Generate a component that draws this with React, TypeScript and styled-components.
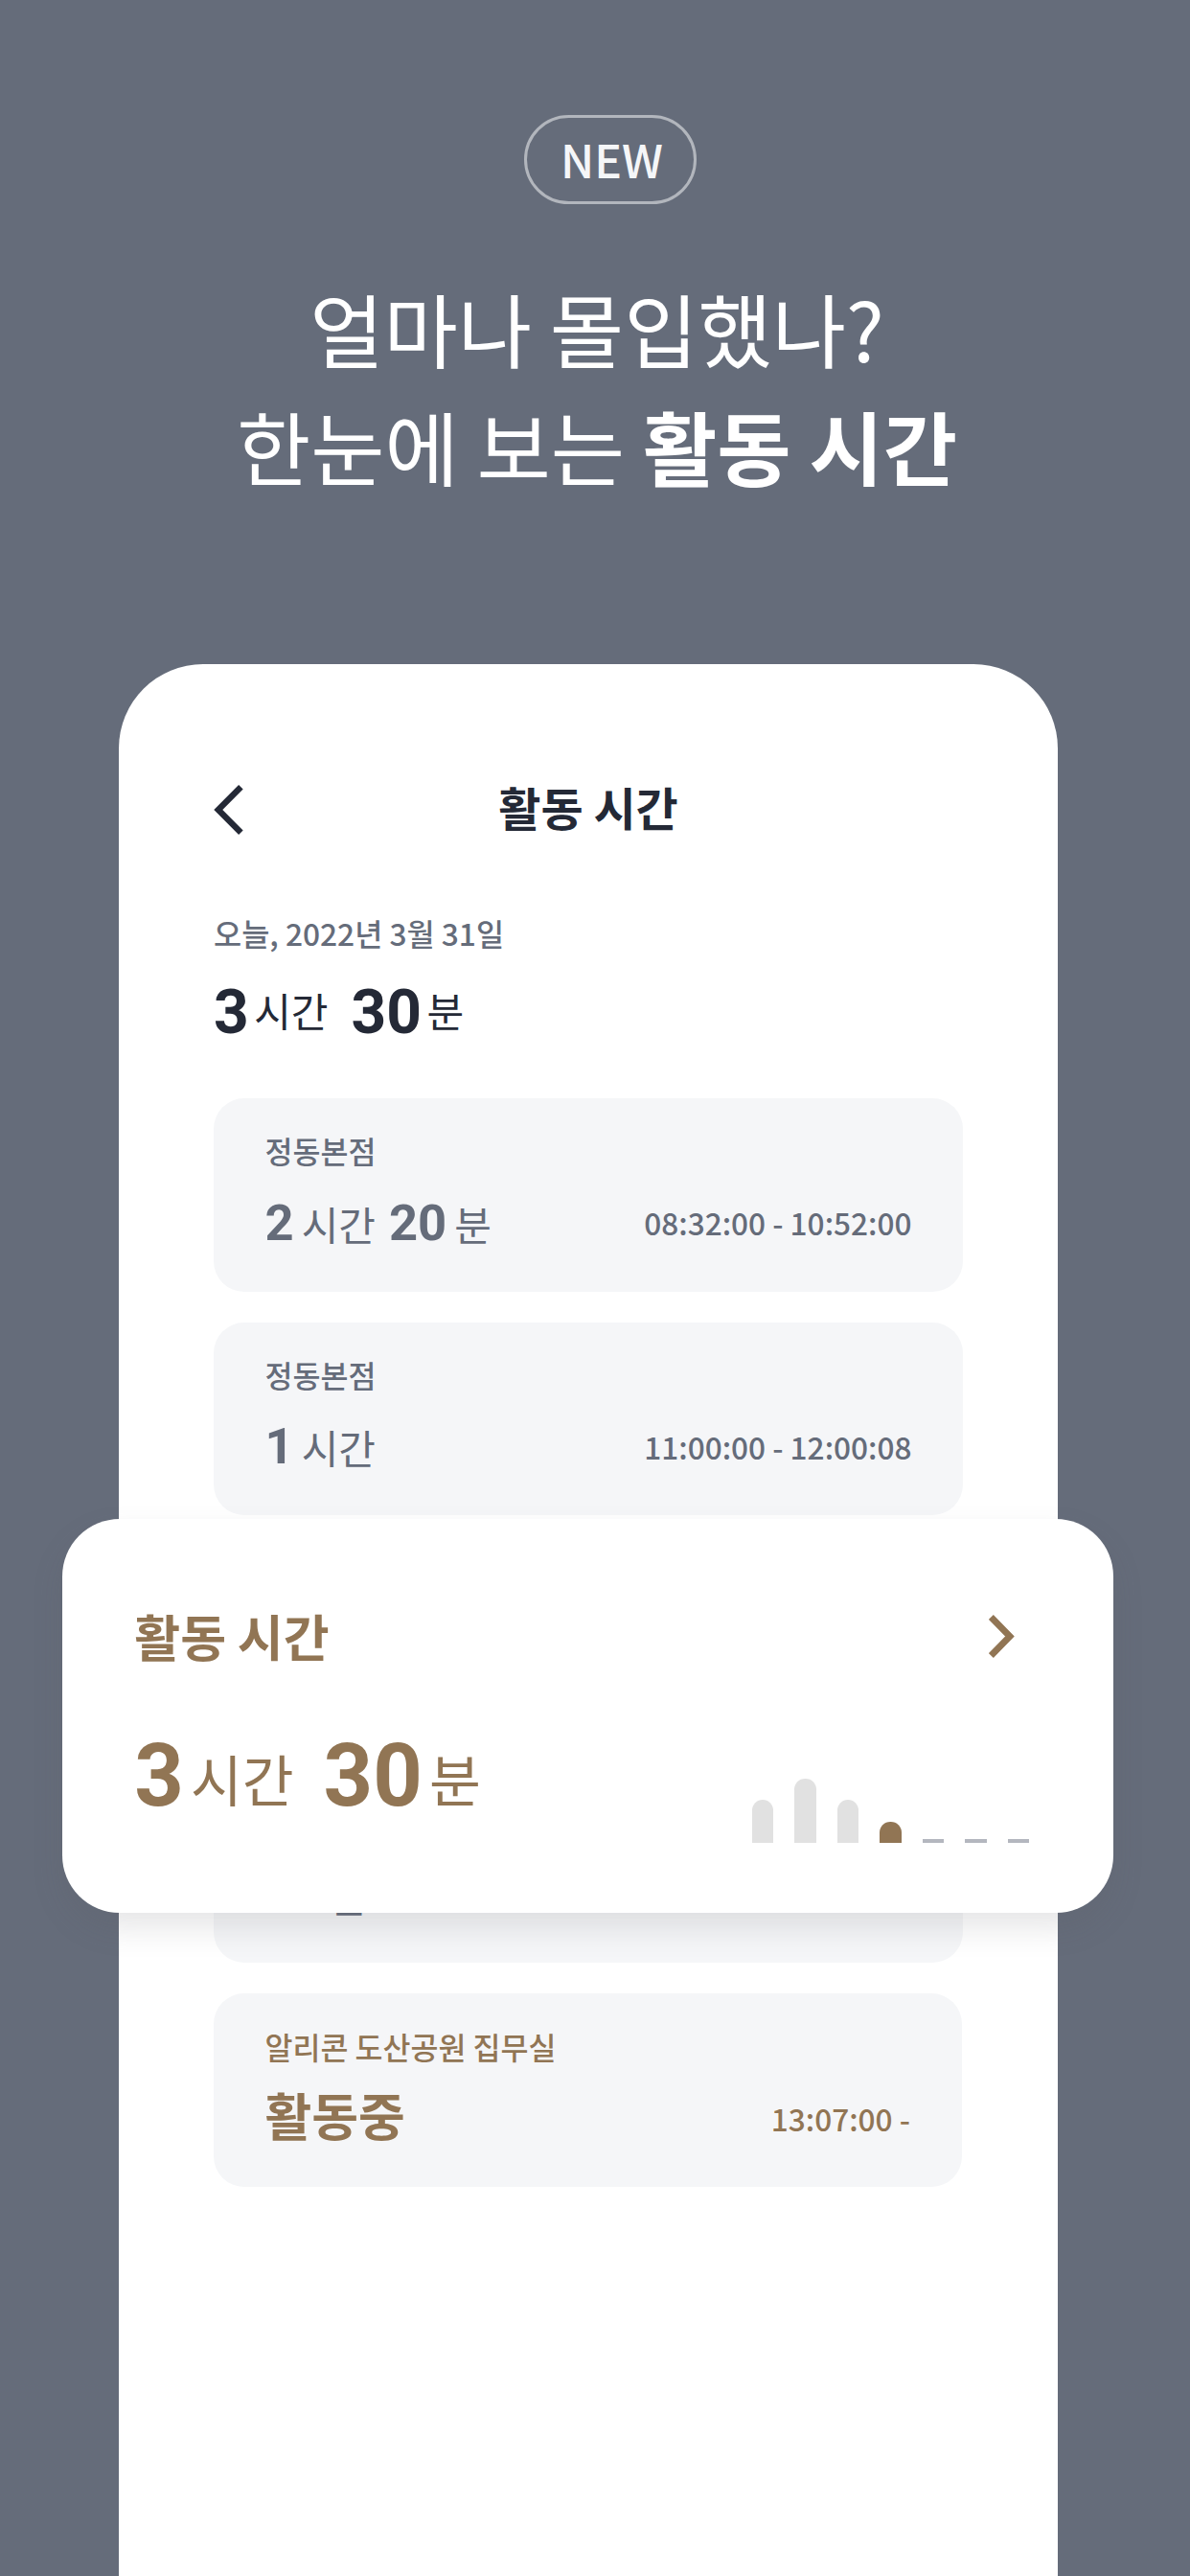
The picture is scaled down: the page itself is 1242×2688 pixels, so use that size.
import React from "react";
import styled, { createGlobalStyle, ThemeProvider } from "styled-components";

const theme = {
    colors: {
        background: "#656c7a",
        surface: "#ffffff",
        card: "#f5f6f8",
        dark: "#242936",
        gray: "#656c7a",
        brown: "#917554",
        bar: "#e1e1e1",
        empty: "#b4b7bf"
    }
};

const GlobalStyle = createGlobalStyle`
    * {
        box-sizing: border-box;
    }

    body {
        margin: 0;
        background: ${theme.colors.background};
        font-family: "Noto Sans CJK KR", sans-serif;
    }

    h1, h2, h3, p {
        margin: 0;
    }
`;

const Page = styled.main`
    display: flex;
    flex-direction: column;
    width: 1242px;
    height: 2688px;
    padding-top: 120px;
    overflow: hidden;
    color: ${props => props.theme.colors.surface};
`;

const Hero = styled.header`
    display: flex;
    flex-direction: column;
    align-items: center;
    height: 573px;
    flex: none;
`;

const Badge = styled.span`
    display: flex;
    justify-content: center;
    width: 180px;
    height: 93px;
    margin-left: 31px;
    padding-left: 4px;
    border: 3px solid rgba(255, 255, 255, 0.5);
    border-radius: 47px;
    color: #f5f6f8;
    font-size: 48px;
    font-weight: 500;
    line-height: 85px;
`;

const Headline = styled.h1`
    margin: 68px 0 0 4px;
    font-size: 84px;
    font-weight: 400;
    line-height: 122.6px;
    text-align: center;

    strong {
        font-weight: 700;
    }
`;

const Phone = styled.section`
    position: relative;
    flex: 1;
    width: 980px;
    margin-left: 124px;
    padding: 126px 99px 0;
    border-radius: 88px 88px 0 0;
    background: ${props => props.theme.colors.surface};
    color: ${props => props.theme.colors.dark};
`;

const NavBar = styled.nav`
    display: grid;
    grid-template-columns: 32px 1fr 32px;
    align-items: center;
    height: 52px;
`;

const NavTitle = styled.h2`
    margin-bottom: 7px;
    font-size: 48px;
    font-weight: 700;
    line-height: 45px;
    text-align: center;
`;

const Today = styled.p`
    margin-top: 78px;
    color: ${props => props.theme.colors.gray};
    font-size: 31.7px;
    font-weight: 500;
    line-height: 48px;
`;

// raise lifts the small unit label above the bottom of the digits' box
const DURATION = {
    large: { num: 90, unit: 58.5, gap: 7, split: 31, raise: 15 },
    medium: { num: 64, unit: 42, gap: 5.5, split: 24, raise: 14 },
    small: { num: 52.5, unit: 42, gap: 8, split: 14, raise: 4.5 }
};

type Size = keyof typeof DURATION;

const DurationRow = styled.div<{ $size: Size }>`
    display: flex;
    column-gap: ${props => DURATION[props.$size].split}px;
    height: ${props => DURATION[props.$size].num}px;
    white-space: nowrap;
`;

const Amount = styled.span<{ $size: Size }>`
    display: flex;
    align-items: flex-end;
    column-gap: ${props => DURATION[props.$size].gap}px;
    font-size: ${props => DURATION[props.$size].unit}px;
    font-weight: 400;
    line-height: 1;

    b {
        font-family: Roboto, sans-serif;
        font-size: ${props => DURATION[props.$size].num}px;
        font-weight: 700;
    }

    span {
        padding-bottom: ${props => DURATION[props.$size].raise}px;
    }
`;

const Summary = styled.div`
    margin-top: 28.4px;
`;

const List = styled.div`
    display: grid;
    gap: 32px;
    margin-top: 56.6px;
`;

const Card = styled.article<{ $active?: boolean }>`
    display: flex;
    flex-direction: column;
    height: 201.6px;
    margin-right: ${props => (props.$active ? 1.5 : 0)}px;
    padding: 30.5px 53.5px 0;
    border-radius: 32px;
    background: ${props => props.theme.colors.card};
    color: ${props => (props.$active ? props.theme.colors.brown : props.theme.colors.gray)};
`;

const Place = styled.h3`
    height: 48px;
    font-size: 31.5px;
    font-weight: 500;
    line-height: 48px;
`;

const CardRow = styled.div`
    display: flex;
    align-items: center;
    justify-content: space-between;
    height: 103px;
`;

const Status = styled.strong`
    margin-bottom: 8px;
    font-size: 53px;
    font-weight: 700;
    line-height: 54px;
`;

const Range = styled.time`
    margin-bottom: 1px;
    font-size: 31.6px;
    font-weight: 500;
    line-height: 48px;
`;

const Overlay = styled.section`
    position: absolute;
    top: 892px;
    left: -58.7px;
    width: 1096.7px;
    height: 411px;
    padding: 88px 88px 0 75px;
    border-radius: 60px;
    background: ${props => props.theme.colors.surface};
    box-shadow: 0 16px 32px rgba(84, 88, 96, 0.15);
    color: ${props => props.theme.colors.brown};
`;

const OverlayHeader = styled.div`
    display: flex;
    align-items: center;
    justify-content: space-between;
    height: 69px;
    padding-right: 15px;
`;

const OverlayTitle = styled.h2`
    margin-bottom: 2px;
    font-size: 52px;
    font-weight: 700;
    line-height: 64px;
`;

const OverlayBody = styled.div`
    display: flex;
    align-items: flex-end;
    justify-content: space-between;
    height: 181px;
`;

const Total = styled.div`
    padding-bottom: 24px;
`;

const Chart = styled.div`
    display: flex;
    align-items: flex-end;
    gap: 22px;
`;

const Bar = styled.i<{ $height: number; $active?: boolean }>`
    width: 22.5px;
    height: ${props => props.$height || 4}px;
    border-radius: ${props => (props.$height ? "11.25px 11.25px 0 0" : 0)};
    background: ${props =>
        props.$active
            ? props.theme.colors.brown
            : props.$height
              ? props.theme.colors.bar
              : props.theme.colors.empty};
`;

const bars = [45, 67, 45, 22.5, 0, 0, 0];

const activities = [
    { place: "정동본점", hours: 2, minutes: 20, range: "08:32:00 - 10:52:00" },
    { place: "정동본점", hours: 1, range: "11:00:00 - 12:00:08" },
    {},
    { minutes: 10 },
    { place: "알리콘 도산공원 집무실", active: true, range: "13:07:00 -" }
];

const Duration = ({ size, hours, minutes }: { size: Size; hours?: number; minutes?: number }) => (
    <DurationRow $size={size}>
        {hours && (
            <Amount $size={size}>
                <b>{hours}</b>
                <span>시간</span>
            </Amount>
        )}
        {minutes && (
            <Amount $size={size}>
                <b>{minutes}</b>
                <span>분</span>
            </Amount>
        )}
    </DurationRow>
);

const BackIcon = () => (
    <svg width="32" height="52" viewBox="0 0 32 52" fill="none">
        <path d="M28.4 2.3L4.8 26L28.4 49.7" stroke="currentColor" strokeWidth="6.4" />
    </svg>
);

const NextIcon = () => (
    <svg width="27" height="45" viewBox="0 0 27 45" fill="none">
        <path d="M2.4 2.5L22 22.5L2.4 42.5" stroke="currentColor" strokeWidth="6.8" />
    </svg>
);

export default function App() {
    return (
        <ThemeProvider theme={theme}>
            <GlobalStyle />
            <Page>
                <Hero>
                    <Badge>NEW</Badge>
                    <Headline>
                        얼마나 몰입했나?
                        <br />
                        한눈에 보는 <strong>활동 시간</strong>
                    </Headline>
                </Hero>
                <Phone>
                    <NavBar>
                        <BackIcon />
                        <NavTitle>활동 시간</NavTitle>
                    </NavBar>
                    <Today>오늘, 2022년 3월 31일</Today>
                    <Summary>
                        <Duration size="medium" hours={3} minutes={30} />
                    </Summary>
                    <List>
                        {activities.map((item, index) => (
                            <Card key={index} $active={item.active}>
                                <Place>{item.place}</Place>
                                <CardRow>
                                    {item.active ? (
                                        <Status>활동중</Status>
                                    ) : (
                                        <Duration size="small" hours={item.hours} minutes={item.minutes} />
                                    )}
                                    <Range>{item.range}</Range>
                                </CardRow>
                            </Card>
                        ))}
                    </List>
                    <Overlay>
                        <OverlayHeader>
                            <OverlayTitle>활동 시간</OverlayTitle>
                            <NextIcon />
                        </OverlayHeader>
                        <OverlayBody>
                            <Total>
                                <Duration size="large" hours={3} minutes={30} />
                            </Total>
                            <Chart>
                                {bars.map((height, index) => (
                                    <Bar key={index} $height={height} $active={index === 3} />
                                ))}
                            </Chart>
                        </OverlayBody>
                    </Overlay>
                </Phone>
            </Page>
        </ThemeProvider>
    );
}
